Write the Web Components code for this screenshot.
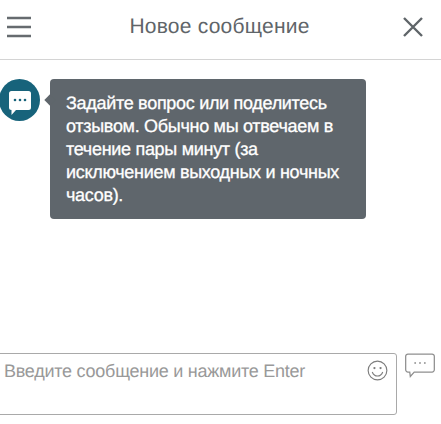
<!DOCTYPE html>
<html lang="ru">
<head>
<meta charset="utf-8">
<title>Новое сообщение</title>
<style>
  html, body { margin: 0; height: 100%; background: #fff; overflow: hidden; }
  body { font-family: "Liberation Sans", Arial, sans-serif; text-rendering: geometricPrecision; }
</style>
</head>
<body>
<chat-window>
  <chat-header slot="header">Новое сообщение</chat-header>
  <chat-message>Задайте вопрос или поделитесь отзывом. Обычно мы отвечаем в течение пары минут (за исключением выходных и ночных часов).</chat-message>
  <chat-composer slot="composer" placeholder="Введите сообщение и нажмите Enter"></chat-composer>
</chat-window>

<script>
class ChatWindow extends HTMLElement {
  constructor() {
    super()

    this.attachShadow({ mode: 'open' }).innerHTML = `
      <style>
        :host {
          display: flex;
          flex-direction: column;
          width: 441px;
          height: 424px;
        }

        main {
          flex: 1;
          padding: 19px 0 0;
        }
      </style>
      <slot name="header"></slot>
      <main><slot></slot></main>
      <slot name="composer"></slot>
    `
  }
}

class ChatHeader extends HTMLElement {
  constructor() {
    super()

    this.attachShadow({ mode: 'open' }).innerHTML = `
      <style>
        :host {
          display: flex;
          align-items: center;
          justify-content: space-between;
          box-sizing: border-box;
          height: 60px;
          padding: 0 18px 6px 7px;
          border-bottom: 1px solid #d4d4d4;
          color: #5f6569;
        }

        h1 {
          flex: 1;
          margin: 0;
          padding-left: 5px;
          font: 400 21px/24px "Liberation Sans", Arial, sans-serif;
          text-align: center;
          letter-spacing: .22px;
        }

        svg { display: block; }
      </style>
      <svg width="24" height="22" viewBox="0 0 24 22" aria-hidden="true">
        <path d="M0 2h24M0 11h24M0 20h24" stroke="#666b6f" stroke-width="2.400" fill="none"/>
      </svg>
      <h1><slot></slot></h1>
      <svg width="20" height="20" viewBox="0 0 20 20" aria-hidden="true">
        <path d="M1 1l18 18M19 1L1 19" stroke="#5f6569" stroke-width="2.400" fill="none"/>
      </svg>
    `
  }
}

class ChatMessage extends HTMLElement {
  constructor() {
    super()

    this.attachShadow({ mode: 'open' }).innerHTML = `
      <style>
        :host {
          display: flex;
          align-items: flex-start;
          gap: 10px;
          margin-left: -1px;
        }

        .avatar {
          flex: none;
          display: flex;
          align-items: center;
          justify-content: center;
          width: 41px;
          height: 42px;
          border-radius: 50%;
          background: #17637b;
        }

        .avatar svg {
          margin-top: 6px;
        }

        .bubble {
          position: relative;
          box-sizing: border-box;
          width: 316px;
          height: 140px;
          padding: 13px 16px;
          border-radius: 4px;
          background: #5f666c;
          color: #fff;
          font-size: 18px;
          line-height: 23px;
          letter-spacing: -.3px;
          -webkit-text-stroke: .3px #fff;
        }

        .bubble::before {
          content: '';
          position: absolute;
          left: -4px;
          top: 17px;
          width: 8px;
          height: 8px;
          background: #5f666c;
          transform: rotate(45deg);
        }
      </style>
      <div class="avatar">
        <svg width="22" height="24" viewBox="0 0 22 24" aria-hidden="true">
          <path fill="#fff" d="M2.500 0h17A2.500 2.500 0 0 1 22 2.500v14a2.500 2.500 0 0 1-2.500 2.500H7l-4.500 5v-5A2.500 2.500 0 0 1 0 16.500v-14A2.500 2.500 0 0 1 2.500 0z"/>
          <circle cx="6" cy="9" r="1.300" fill="#17637b"/>
          <circle cx="11" cy="9" r="1.300" fill="#17637b"/>
          <circle cx="16" cy="9" r="1.300" fill="#17637b"/>
        </svg>
      </div>
      <div class="bubble"><slot></slot></div>
    `
  }
}

class ChatComposer extends HTMLElement {
  constructor() {
    super()

    this.attachShadow({ mode: 'open' }).innerHTML = `
      <style>
        :host {
          display: flex;
          align-items: flex-start;
          gap: 8px;
          height: 71px;
          margin-left: -4px;
        }

        .box {
          flex: none;
          display: flex;
          align-items: flex-start;
          justify-content: space-between;
          box-sizing: border-box;
          width: 401px;
          height: 62px;
          padding: 6px 8px 0 7px;
          border: 1px solid #a9a9a9;
          border-radius: 3px;
        }

        .hint {
          color: #999;
          font-size: 18px;
          line-height: 22px;
          letter-spacing: -.25px;
          white-space: nowrap;
        }

        svg { display: block; flex: none; }
      </style>
      <div class="box">
        <span class="hint" id="hint"></span>
        <svg width="21" height="21" viewBox="0 0 22 22" aria-hidden="true">
          <g fill="none" stroke="#7d7d7d" stroke-width="1.200">
            <circle cx="11" cy="11" r="9.800"/>
            <path d="M5.500 12.500c1.200 3 3.200 4.300 5.500 4.300s4.300-1.300 5.500-4.300"/>
          </g>
          <circle cx="7.800" cy="8.500" r="1.200" fill="#7d7d7d"/>
          <circle cx="14.200" cy="8.500" r="1.200" fill="#7d7d7d"/>
        </svg>
      </div>
      <svg width="30" height="25" viewBox="0 0 31 25" aria-hidden="true">
        <path fill="#fff" stroke="#8f8f8f" stroke-width="1.300" d="M3 .7h25a2.300 2.300 0 0 1 2.300 2.300v14a2.300 2.300 0 0 1-2.300 2.300H9.500l-4 4.500-.6-4.500H3A2.300 2.300 0 0 1 .7 17V3A2.300 2.300 0 0 1 3 .7z"/>
        <circle cx="10.500" cy="10" r="1" fill="#9a9a9a"/>
        <circle cx="15.500" cy="10" r="1" fill="#9a9a9a"/>
        <circle cx="20.500" cy="10" r="1" fill="#9a9a9a"/>
      </svg>
    `
  }

  connectedCallback() {
    this.shadowRoot.getElementById('hint').textContent = this.getAttribute('placeholder')
  }
}

customElements.define('chat-window', ChatWindow)
customElements.define('chat-header', ChatHeader)
customElements.define('chat-message', ChatMessage)
customElements.define('chat-composer', ChatComposer)
</script>
</body>
</html>
